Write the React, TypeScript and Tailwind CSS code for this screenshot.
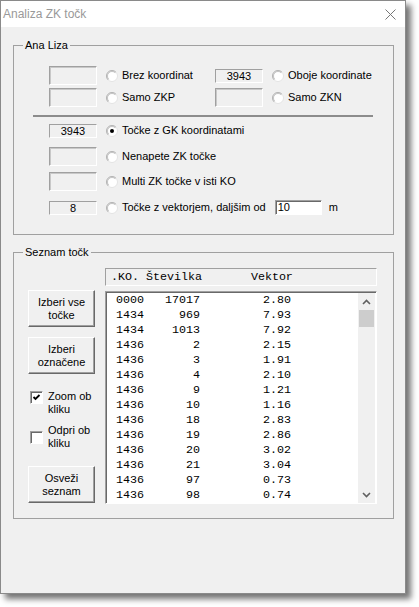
import React from "react";

const rows: [string, string, string][] = [
    ["0000", "17017", "2.80"],
    ["1434", "969", "7.93"],
    ["1434", "1013", "7.92"],
    ["1436", "2", "2.15"],
    ["1436", "3", "1.91"],
    ["1436", "4", "2.10"],
    ["1436", "9", "1.21"],
    ["1436", "10", "1.16"],
    ["1436", "18", "2.83"],
    ["1436", "19", "2.86"],
    ["1436", "20", "3.02"],
    ["1436", "21", "3.04"],
    ["1436", "97", "0.73"],
    ["1436", "98", "0.74"],
];

const Radio = ({ checked = false }: { checked?: boolean }) => (
    <svg width="12" height="12" viewBox="0 0 12 12" className="shrink-0">
        <circle cx="6" cy="6" r="5.5" fill="#fff" stroke="#e3e3e3" />
        <path d="M2.1 9.9 A5.5 5.5 0 0 1 9.9 2.1" stroke="#b4b4b4" fill="none" />
        <path d="M2.8 9.2 A4.5 4.5 0 0 1 9.2 2.8" stroke="#a0a0a0" fill="none" strokeWidth="0.6" />
        {checked && <circle cx="6" cy="6" r="2" fill="#000" />}
    </svg>
);

const Checkbox = ({ checked = false }: { checked?: boolean }) => (
    <div className="w-[13px] h-[13px] shrink-0 bg-white border border-t-[#a0a0a0] border-l-[#a0a0a0] border-b-white border-r-white shadow-[inset_1px_1px_0_#696969]">
        {checked && (
            <svg width="11" height="11" viewBox="0 0 11 11">
                <path d="M2.5 5 L4.5 7 L8.5 3" stroke="#000" strokeWidth="1.8" fill="none" />
            </svg>
        )}
    </div>
);

// short sunken label with a value, or the taller empty field
const Field = ({ value }: { value?: string }) =>
    value ? (
        <div className="w-[48px] h-[14px] shrink-0 border border-t-[#a0a0a0] border-l-[#a0a0a0] border-b-white border-r-white text-center leading-[12px]">
            {value}
        </div>
    ) : (
        <div className="w-[48px] h-[19px] shrink-0 border border-t-[#a0a0a0] border-l-[#a0a0a0] border-b-white border-r-white shadow-[inset_1px_1px_0_#c8c8c8]" />
    );

const Option = ({
    value,
    label,
    checked,
}: {
    value?: string;
    label: string;
    checked?: boolean;
}) => (
    <div className="flex items-center h-[19px]">
        <Field value={value} />
        <div className="ml-[9px]">
            <Radio checked={checked} />
        </div>
        <span className="ml-[4px] whitespace-nowrap">{label}</span>
    </div>
);

const Button = ({ children }: { children: React.ReactNode }) => (
    <div className="w-[67px] h-[37px] flex items-center justify-center text-center bg-[#f0f0f0] border border-t-white border-l-white border-b-[#696969] border-r-[#696969] shadow-[inset_-1px_-1px_0_#a0a0a0]">
        <span>{children}</span>
    </div>
);

export default function App() {
    return (
        <div className="w-[419px] h-[607px] bg-white font-['Liberation_Sans',Arial,sans-serif] text-[11px] leading-[13px] text-black">
            <div className="w-[406px] h-[594px] border border-[#8a8a8a] bg-[#f0f0f0] shadow-[5px_5px_6px_rgba(0,0,0,0.55)] flex flex-col">
                {/* title bar */}
                <div className="h-[26px] shrink-0 bg-white flex items-center justify-between pl-[2px] pr-[9px]">
                    <span className="text-[12px] text-[#999]">Analiza ZK točk</span>
                    <svg width="11" height="11" viewBox="0 0 11 11">
                        <path d="M0.5 0.5 L10.5 10.5 M10.5 0.5 L0.5 10.5" stroke="#777" strokeWidth="1" />
                    </svg>
                </div>

                {/* Ana Liza */}
                <fieldset className="ml-[12px] mt-[12px] w-[381px] h-[196px] shrink-0 border border-[#a0a0a0] p-0 m-0">
                    <legend className="ml-[9px] px-[2px] leading-[13px]">Ana Liza</legend>
                    <div className="pt-[14px]">
                        <div className="ml-[35px] flex">
                            <div className="w-[166px]">
                                <Option label="Brez koordinat" />
                            </div>
                            <Option value="3943" label="Oboje koordinate" />
                        </div>
                        <div className="ml-[35px] mt-[3px] flex">
                            <div className="w-[166px]">
                                <Option label="Samo ZKP" />
                            </div>
                            <Option label="Samo ZKN" />
                        </div>
                        <div className="ml-[19px] mt-[8px] w-[340px] h-[2px] bg-[#8c8c8c]" />
                        <div className="ml-[35px] mt-[4px]">
                            <Option value="3943" label="Točke z GK koordinatami" checked />
                        </div>
                        <div className="ml-[35px] mt-[7px]">
                            <Option label="Nenapete ZK točke" />
                        </div>
                        <div className="ml-[35px] mt-[6px]">
                            <Option label="Multi ZK točke v isti KO" />
                        </div>
                        <div className="ml-[35px] mt-[7px] flex items-center h-[19px]">
                            <Option value="8" label="Točke z vektorjem, daljšim od" />
                            <div className="ml-[9px] w-[47px] h-[15px] bg-white border border-t-[#a0a0a0] border-l-[#a0a0a0] border-b-white border-r-white shadow-[inset_1px_1px_0_#696969] pl-[2px] leading-[13px]">
                                10
                            </div>
                            <span className="ml-[7px]">m</span>
                        </div>
                    </div>
                </fieldset>

                {/* Seznam točk */}
                <fieldset className="ml-[12px] mt-[11px] w-[381px] h-[273px] shrink-0 border border-[#a0a0a0] p-0 m-0">
                    <legend className="ml-[9px] px-[2px] leading-[13px]">Seznam točk</legend>
                    <div className="pt-[9px] flex">
                        <div className="ml-[14px] pt-[22px] flex flex-col">
                            <Button>
                                Izberi vse
                                <br />
                                točke
                            </Button>
                            <div className="mt-[10px]">
                                <Button>
                                    Izberi
                                    <br />
                                    označene
                                </Button>
                            </div>
                            <div className="mt-[16px] flex items-start">
                                <div className="ml-[2px] mt-[1px]">
                                    <Checkbox checked />
                                </div>
                                <span className="ml-[5px]">
                                    Zoom ob
                                    <br />
                                    kliku
                                </span>
                            </div>
                            <div className="mt-[8px] flex items-start">
                                <div className="ml-[2px] mt-[7px]">
                                    <Checkbox />
                                </div>
                                <span className="ml-[5px]">
                                    Odpri ob
                                    <br />
                                    kliku
                                </span>
                            </div>
                            <div className="mt-[16px]">
                                <Button>
                                    Osveži
                                    <br />
                                    seznam
                                </Button>
                            </div>
                        </div>

                        <div className="ml-[10px] w-[272px] flex flex-col font-['Liberation_Mono','Courier_New',monospace] text-[11.67px]">
                            <div className="h-[18px] border border-t-[#a0a0a0] border-l-[#a0a0a0] border-b-white border-r-white pl-[5px] leading-[16px] whitespace-pre">
                                {".KO. Številka       Vektor"}
                            </div>
                            <div className="mt-[5px] h-[213px] bg-white border border-t-[#a0a0a0] border-l-[#a0a0a0] border-b-white border-r-white shadow-[inset_1px_1px_0_#696969] flex">
                                <div className="flex-1 pl-[10px] pt-[1px]">
                                    {rows.map(([ko, num, vec], i) => (
                                        <div key={i} className="h-[15px] leading-[15px] whitespace-pre">
                                            {ko + num.padStart(8) + vec.padStart(13)}
                                        </div>
                                    ))}
                                </div>
                                <div className="w-[17px] mt-[1px] mr-[1px] bg-[#f0f0f0] flex flex-col items-center">
                                    <div className="h-[17px] flex items-center justify-center">
                                        <svg width="9" height="6" viewBox="0 0 9 6">
                                            <path d="M1 5 L4.5 1.5 L8 5" stroke="#606060" strokeWidth="1.6" fill="none" />
                                        </svg>
                                    </div>
                                    <div className="w-[15px] h-[17px] bg-[#cdcdcd]" />
                                    <div className="flex-1" />
                                    <div className="h-[17px] flex items-center justify-center">
                                        <svg width="9" height="6" viewBox="0 0 9 6">
                                            <path d="M1 1 L4.5 4.5 L8 1" stroke="#606060" strokeWidth="1.6" fill="none" />
                                        </svg>
                                    </div>
                                </div>
                            </div>
                        </div>
                    </div>
                </fieldset>
            </div>
        </div>
    );
}
